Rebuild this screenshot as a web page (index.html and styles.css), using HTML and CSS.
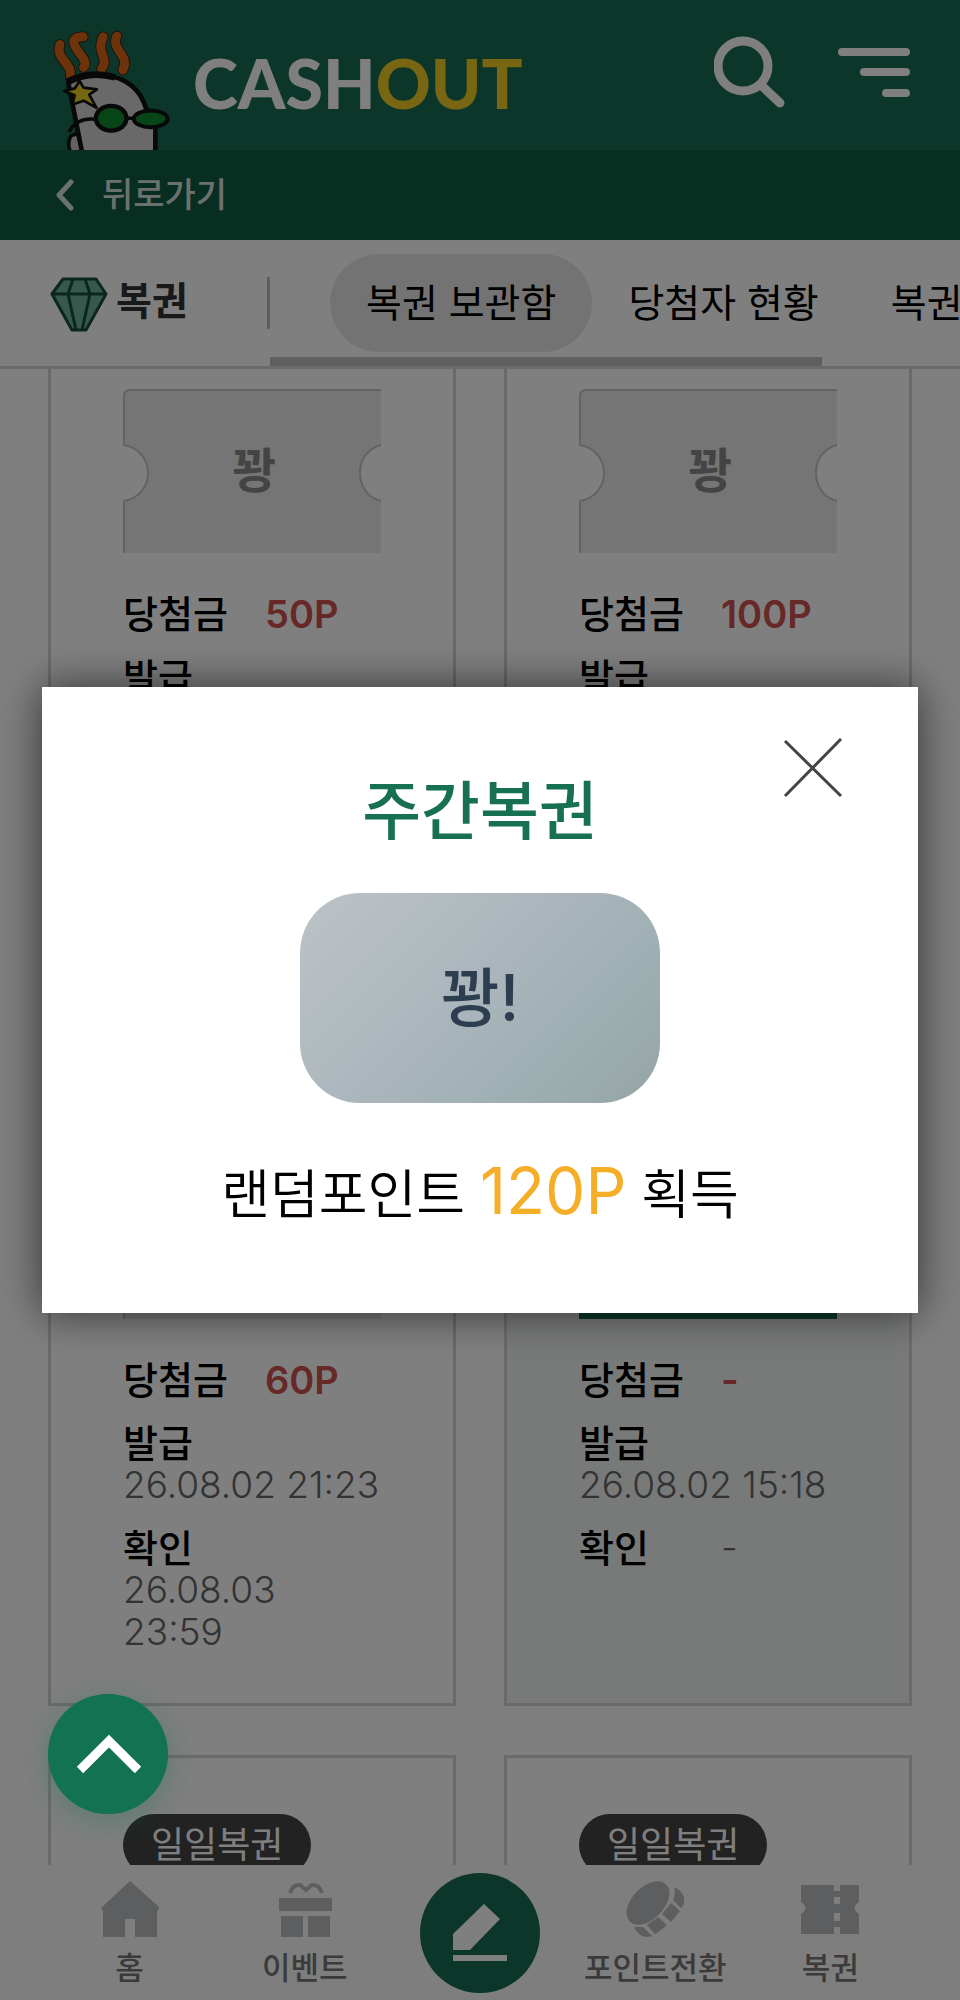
FILE: index.html
```html
<!DOCTYPE html>
<html lang="ko">
<head>
	<meta charset="UTF-8">
	<meta name="viewport" content="width=device-width, initial-scale=1">
	<title>CASHOUT - 복권 보관함</title>
	<link rel="stylesheet" href="styles.css">
</head>
<body>
	<header class="header">
		<a class="logo" href="#">
			<svg class="mascot" viewBox="35 30 355 360" aria-hidden="true">
				<g fill="none" stroke="#3a1c0a" stroke-width="32" stroke-linecap="round" stroke-linejoin="round">
					<path d="M59 73C44 118 98 130 90 166M129 50C80 50 105 83 122 105Q142 128 130 142M189 50C165 100 210 112 184 146M230 48C210 90 272 105 248 150"/>
				</g>
				<g fill="none" stroke="#d8661a" stroke-width="27" stroke-linecap="round" stroke-linejoin="round">
					<path d="M59 73C44 118 98 130 90 166M129 50C80 50 105 83 122 105Q142 128 130 142M189 50C165 100 210 112 184 146M230 48C210 90 272 105 248 150"/>
				</g>
				<path d="M92 400Q78 370 92 348L112 340L128 400Z" fill="#c4c4c4" stroke="#111" stroke-width="11"/>
				<path d="M126 400L84 188Q150 152 220 170Q295 190 318 265L346 300V400Z" fill="#d2d2d2" stroke="#111" stroke-width="14"/>
				<path d="M80 186Q150 150 225 172" fill="none" stroke="#111" stroke-width="20"/>
				<path d="M118 183L130 203L170 208L147 224L169 264L130 242L97 254L103 226L72 213L104 205Z" fill="#e8cf28" stroke="#111" stroke-width="8" stroke-linejoin="round"/>
				<path d="M86 336Q110 292 166 298M262 295H285" fill="none" stroke="#111" stroke-width="11"/>
				<ellipse cx="213" cy="295" rx="46" ry="37" fill="#0e8a2c" stroke="#111" stroke-width="13"/>
				<ellipse cx="332" cy="297" rx="51" ry="25" fill="#0e8a2c" stroke="#111" stroke-width="12"/>
			</svg>
			<span class="logo-text">CASH<em>OUT</em></span>
		</a>
		<div class="header-btns">
			<button type="button" aria-label="검색">
				<svg width="72" height="72" viewBox="0 0 72 72" fill="none" stroke="#fff" stroke-width="9" stroke-linecap="round">
					<circle cx="29" cy="30" r="25"/>
					<path d="M47 49L66 67"/>
				</svg>
			</button>
			<button type="button" aria-label="메뉴">
				<svg width="72" height="72" viewBox="0 0 72 72" fill="none" stroke="#fff" stroke-width="8" stroke-linecap="round">
					<path d="M4 16H68M26 36H68M48 57H68"/>
				</svg>
			</button>
		</div>
	</header>

	<div class="back-bar">
		<a class="back" href="#">
			<svg width="18" height="32" viewBox="0 0 18 32" fill="none" stroke="currentColor" stroke-width="5" stroke-linecap="round" stroke-linejoin="round"><path d="M15 3L3 16L15 29"/></svg>
			뒤로가기
		</a>
	</div>

	<nav class="tabs">
		<h1 class="tabs-title">
			<svg width="58" height="60" viewBox="0 -4 58 60" fill="#6fb09a" stroke="#164c3d" stroke-width="3" stroke-linejoin="round">
				<path d="M13 2H46L56 17L36 53H22L2 17Z"/>
				<path d="M2 17H56M23 2L18 17L26 53M35 2L40 17L32 53" fill="none"/>
			</svg>
			<span>복권</span>
		</h1>
		<div class="tabs-scroll">
			<a class="tab on" href="#">복권 보관함</a>
			<a class="tab" href="#">당첨자 현황</a>
			<a class="tab" href="#">복권 안내</a>
		</div>
	</nav>

	<main class="list" id="list">
		<article class="card">
			<span class="badge">일일복권</span>
			<div class="ticket">
				<svg class="ticket-bg" width="258" height="164"><path d="M1 56V7Q1 1 7 1H270V56C226 50 226 118 270 112V170H1V112C33 106 33 62 1 56Z"/></svg>
				<strong>꽝</strong>
			</div>
			<dl>
				<div><dt>당첨금</dt><dd class="prize">50P</dd></div>
				<div><dt>발급</dt><dd>26.08.03 21:23</dd></div>
				<div><dt>확인</dt><dd>26.08.03<br>23:59</dd></div>
			</dl>
		</article>
		<article class="card">
			<span class="badge">일일복권</span>
			<div class="ticket">
				<svg class="ticket-bg" width="258" height="164"><path d="M1 56V7Q1 1 7 1H270V56C226 50 226 118 270 112V170H1V112C33 106 33 62 1 56Z"/></svg>
				<strong>꽝</strong>
			</div>
			<dl>
				<div><dt>당첨금</dt><dd class="prize">100P</dd></div>
				<div><dt>발급</dt><dd>26.08.03 15:18</dd></div>
				<div><dt>확인</dt><dd>26.08.03<br>23:59</dd></div>
			</dl>
		</article>
		<article class="card">
			<span class="badge">일일복권</span>
			<div class="ticket">
				<svg class="ticket-bg" width="258" height="164"><path d="M1 56V7Q1 1 7 1H270V56C226 50 226 118 270 112V170H1V112C33 106 33 62 1 56Z"/></svg>
				<strong>꽝</strong>
			</div>
			<dl>
				<div><dt>당첨금</dt><dd class="prize">60P</dd></div>
				<div><dt>발급</dt><dd>26.08.02 21:23</dd></div>
				<div><dt>확인</dt><dd>26.08.03<br>23:59</dd></div>
			</dl>
		</article>
		<article class="card new">
			<span class="badge">주간복권</span>
			<div class="ticket"><strong>확인</strong></div>
			<dl>
				<div><dt>당첨금</dt><dd class="prize">-</dd></div>
				<div><dt>발급</dt><dd>26.08.02 15:18</dd></div>
				<div><dt>확인</dt><dd>-</dd></div>
			</dl>
		</article>
		<article class="card">
			<span class="badge">일일복권</span>
			<div class="ticket"><strong>꽝</strong></div>
		</article>
		<article class="card">
			<span class="badge">일일복권</span>
			<div class="ticket"><strong>꽝</strong></div>
		</article>
	</main>

	<nav class="bottom">
		<a href="#">
			<svg width="58" height="58" viewBox="0 0 58 58"><path d="M29 1L59 28L56 31V57H34V39H24V57H2V31L0 28Z"/></svg>
			홈
		</a>
		<a href="#">
			<svg width="58" height="58" viewBox="0 0 58 58">
				<path d="M14 13Q17 4 24 5L30 10L36 5Q43 4 46 13" fill="none" stroke="#b9bdc0" stroke-width="4"/>
				<path d="M3 18H56V31H3ZM5 36H27V57H5ZM32 36H54V57H32Z"/>
			</svg>
			이벤트
		</a>
		<a class="write" href="#" aria-label="글쓰기">
			<svg width="54" height="58" viewBox="0 0 54 58"><path d="M0 30L31 0L47 15L17 46H0ZM0 51H54V57H0Z"/></svg>
		</a>
		<a href="#">
			<svg width="58" height="58" viewBox="0 0 58 58">
				<ellipse cx="22" cy="23" rx="26" ry="16" transform="rotate(-46 22 23)"/>
				<path d="M48 7Q62 14 57 26L55 28L47 20Q50 13 48 7ZM45 23L54 31L45 42L36 34ZM32 37L41 45Q35 51 29 54L21 45ZM8 47L17 47L26 56Q14 60 8 47Z"/>
			</svg>
			포인트전환
		</a>
		<a href="#">
			<svg width="58" height="58" viewBox="0 0 58 58"><path d="M0 5H33V11H39V5H58V22Q49 28 58 34V54H39V47H33V54H0V34Q9 28 0 22ZM33 17V24H39V17ZM33 33V41H39V33Z" fill-rule="evenodd"/></svg>
			복권
		</a>
	</nav>

	<!-- 복권 결과 팝업 -->
	<div class="dim">
		<section class="popup" role="dialog" aria-modal="true" aria-labelledby="popupTitle">
			<button class="popup-close" type="button" aria-label="닫기">
				<svg width="60" height="60" viewBox="0 0 60 60" fill="none" stroke="#444" stroke-width="3"><path d="M2 3L58 58M58 1L2 58"/></svg>
			</button>
			<h2 id="popupTitle">주간복권</h2>
			<div class="result">꽝!</div>
			<p>랜덤포인트 <b>120P</b> 획득</p>
		</section>
	</div>

	<button class="go-top" type="button" aria-label="맨 위로">
		<svg width="68" height="40" viewBox="0 0 68 40" fill="none" stroke="#fff" stroke-width="9"><path d="M6 36L35 7L64 36"/></svg>
	</button>

	<script>
		// 보던 카드 위치로 이동
		document.getElementById('list').scrollTop = 194;
	</script>
</body>
</html>
```
FILE: styles.css
```css
* {
	margin: 0;
	padding: 0;
	box-sizing: border-box;
}
body {
	display: flex;
	flex-direction: column;
	height: 100vh;
	overflow: hidden;
	background: #fff;
	color: #000;
	font-family: Inter, "Noto Sans CJK KR", sans-serif;
}
a {
	color: inherit;
	text-decoration: none;
}
button {
	border: none;
	background: none;
	cursor: pointer;
}
svg {
	display: block;
}

/* header */
.header {
	display: flex;
	flex: none;
	justify-content: space-between;
	height: 150px;
	padding: 0 50px 0 52px;
	background: #176c53;
}
.logo {
	display: flex;
	align-items: flex-end;
	gap: 23px;
}
.mascot {
	width: 118px;
	height: 120px;
}
.logo-text {
	color: #fff;
	font: 900 68px/134px Lato, sans-serif;
}
.logo-text em {
	color: #f0cd24;
	font-style: normal;
}
.header-btns {
	display: flex;
	align-items: flex-start;
	gap: 52px;
	padding-top: 36px;
}
.back-bar {
	display: flex;
	flex: none;
	align-items: center;
	height: 90px;
	padding: 0 56px;
	background: #105a43;
}
.back {
	display: flex;
	align-items: center;
	gap: 28px;
	color: #d5e3de;
	font-size: 34px;
	font-weight: 500;
	line-height: 44px;
}

/* tabs */
.tabs {
	display: flex;
	flex: none;
	height: 129px;
	border-bottom: 3px solid #d4d4d4;
}
.tabs-title {
	display: flex;
	flex: none;
	align-items: center;
	gap: 8px;
	width: 270px;
	padding-left: 50px;
	color: #333;
	font-size: 39px;
	font-weight: 700;
	line-height: 58px;
	background: linear-gradient(#bbb, #bbb) right center / 3px 52px no-repeat;
}
.tabs-title span {
	padding-bottom: 4px;
}
.tabs-scroll {
	position: relative;
	display: flex;
	align-items: center;
	flex: 1;
	overflow: hidden;
	padding-left: 60px;
}
/* 가로 스크롤 위치 표시 */
.tabs-scroll::after {
	content: "";
	position: absolute;
	left: 0;
	bottom: 0;
	width: 80%;
	height: 9px;
	background: #c0c0c0;
}
.tab {
	flex: none;
	padding: 0 36px;
	border-radius: 49px;
	font-size: 39px;
	line-height: 98px;
}
.tab.on {
	background: #e7e7e7;
}

/* list */
.list {
	display: grid;
	flex: 1;
	grid-template-columns: repeat(2, minmax(0, 1fr));
	align-content: start;
	gap: 49px 48px;
	min-height: 0;
	padding: 48px;
	overflow-y: auto;
	scrollbar-width: none;
}
.card {
	min-height: 717px;
	padding: 56px 72px 50px;
	border: 3px solid #d4d4d4;
}
.card.new {
	background: #f1f5f3;
}
.badge {
	display: inline-block;
	padding: 0 28px;
	border-radius: 31px;
	background: #444;
	color: #fff;
	font-size: 36px;
	line-height: 62px;
	vertical-align: top;
}
.ticket {
	display: grid;
	place-items: center;
	height: 164px;
	margin: 45px 0 40px;
	overflow: hidden;
	color: #888;
	font-size: 48px;
}
.ticket > * {
	grid-area: 1 / 1;
}
.ticket strong {
	padding: 0 0 8px 4px;
}
.ticket-bg {
	fill: #eaeaea;
	stroke: #c6c6c6;
	stroke-width: 2;
}
.new .ticket {
	background: #176c53;
	color: #fff;
}
dl {
	display: grid;
	gap: 21px;
}
dl div {
	display: flex;
	flex-wrap: wrap;
	line-height: 42px;
}
dt {
	width: 142px;
	font-size: 38px;
	font-weight: 500;
}
dd {
	color: #666;
	font-size: 37px;
	font-weight: 300;
	white-space: nowrap;
}
.prize {
	color: #cf5151;
	font-size: 38px;
	font-weight: 600;
}

/* bottom menu */
.bottom {
	display: grid;
	flex: none;
	grid-template-columns: repeat(5, 1fr);
	height: 135px;
	padding: 0 42px;
	background: #fcfcfc;
}
.bottom a {
	display: flex;
	flex-direction: column;
	align-items: center;
	gap: 8px;
	padding-top: 15px;
	color: #777;
	font-size: 31px;
	font-weight: 500;
	line-height: 44px;
	white-space: nowrap;
}
.bottom svg {
	fill: #b9bdc0;
}
.bottom .write {
	justify-content: center;
	justify-self: center;
	width: 120px;
	height: 120px;
	margin-top: 8px;
	padding: 0;
	border-radius: 50%;
	background: #176c53;
}
.bottom .write svg {
	fill: #fff;
}

/* popup */
.dim {
	position: fixed;
	inset: 0;
	display: flex;
	align-items: center;
	justify-content: center;
	padding: 0 42px;
	background: rgba(0, 0, 0, .5);
}
.popup {
	position: relative;
	width: 100%;
	padding: 78px 0 72px;
	background: #fff;
	box-shadow: 0 0 40px rgba(0, 0, 0, .6);
	text-align: center;
}
.popup h2 {
	color: #17704f;
	font-size: 64px;
	font-weight: 500;
	line-height: 92px;
}
.result {
	width: 360px;
	margin: 36px auto 42px;
	border-radius: 60px;
	background: linear-gradient(135deg, #bdc3c7, #abb6bc 45%, #9fb0b4 70%, #95a5a6);
	color: #2c3e50;
	font-size: 64px;
	font-weight: 500;
	line-height: 210px;
}
.popup p {
	font-size: 53px;
	font-weight: 350;
	line-height: 92px;
}
.popup b {
	color: #f5ae27;
	font-size: 64px;
	font-weight: 400;
}
.popup-close {
	position: absolute;
	top: 51px;
	right: 75px;
}
.go-top {
	position: fixed;
	left: 48px;
	bottom: 186px;
	display: grid;
	place-items: center;
	width: 120px;
	height: 120px;
	border-radius: 50%;
	background: #137252;
	box-shadow: 0 6px 30px rgba(19, 114, 82, .35);
}
```
